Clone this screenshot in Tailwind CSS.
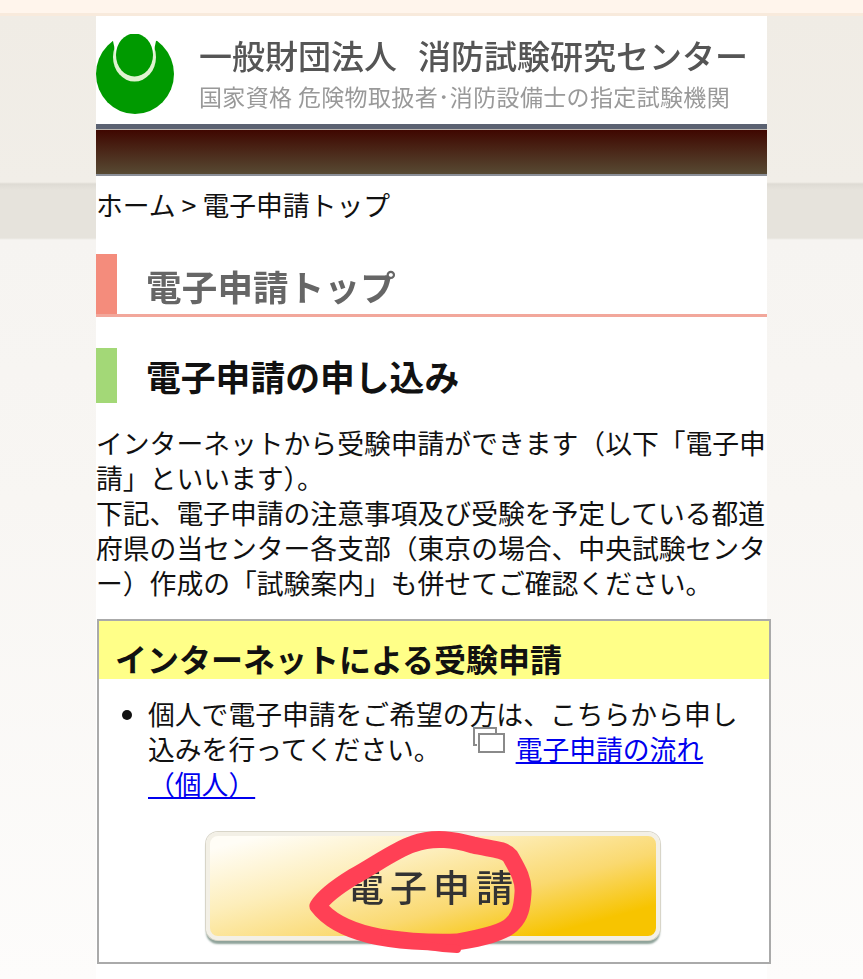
<!DOCTYPE html>
<html lang="ja">
  <head>
    <title>電子申請トップ</title>
    <meta charset="UTF-8" />
    <meta name="viewport" content="width=device-width, initial-scale=1.0" />
    <script src="https://cdn.jsdelivr.net/npm/@tailwindcss/browser@4"></script>
  </head>

  <body class="relative h-[979px] overflow-hidden font-['Noto_Sans_CJK_JP','Liberation_Sans',sans-serif] text-[26.8px] leading-[35px] text-[#111] bg-[linear-gradient(to_bottom,#fff5ec_0,#fff5ec_13px,#f8eadc_13px,#f8eadc_16px,#f0ece5_16px,#f1eee8_182px,#dedbd4_184px,#e6e3dc_190px,#e6e3dc_238px,#f6f4f1_240px,#f8f6f3_500px,#fdfcfb_979px)]">
    <div class="ml-[96px] mt-[16px] h-[963px] w-[671px] bg-white pt-0">
      <!-- logo and title -->
      <div class="flex h-[108px]">
        <svg class="mt-[18px] h-[80px] w-[78px] shrink-0 blur-[0.4px]" viewBox="0 0 78 80">
          <ellipse cx="39" cy="40" rx="39" ry="40" fill="#009a00" />
          <ellipse cx="38.5" cy="23" rx="21.5" ry="24.5" fill="#dff2d0" />
          <path d="M10 -1 H68 V3 L60 7 C59 12 58 16 57 20 H20 C19 16 18 12 17 7 L10 3 Z" fill="#fff" />
          <ellipse cx="38.5" cy="21" rx="18.5" ry="21.5" fill="#009a00" />
        </svg>
        <div class="ml-[25px] min-w-0 blur-[0.5px]">
          <div class="mt-[16px] flex h-[46px] items-center whitespace-nowrap text-[33px] leading-[46px] font-medium text-[#555]">
            <span>一般財団法人</span><span class="ml-[21px]">消防試験研究センター</span>
          </div>
          <div class="mt-[3px] whitespace-nowrap text-[23px] leading-[30px] tracking-[0.35px] text-[#999]">国家資格 危険物取扱者･消防設備士の指定試験機関</div>
        </div>
      </div>
      <!-- nav bar -->
      <div class="h-[5px] bg-[#5b6272]"></div>
      <div class="h-[47px] border-t border-t-[#b9b4ae] border-b-2 border-b-[#8b8f98] bg-[linear-gradient(to_bottom,#3f0700,#574a33)]"></div>

      <div class="pt-[11px] whitespace-nowrap">ホーム &gt; 電子申請トップ</div>

      <!-- page title -->
      <h1 class="mt-[32px] flex h-[63px] border-b-[3px] border-b-[#f2a79b]">
        <span class="w-[21px] shrink-0 bg-[#f48c7c]"></span>
        <span class="ml-[29px] text-[35.5px] leading-[64px] font-bold tracking-[0.2px] text-[#666] blur-[0.6px]">電子申請トップ</span>
      </h1>

      <h2 class="mt-[31px] flex h-[55px]">
        <span class="w-[21px] shrink-0 bg-[#a3d877]"></span>
        <span class="ml-[29px] text-[34.8px] leading-[57px] font-bold text-[#111]">電子申請の申し込み</span>
      </h2>

      <p class="mt-[22px] w-[671px]">インターネットから受験申請ができます（以下「電子申請」といいます）。<br />下記、電子申請の注意事項及び受験を予定している都道府県の当センター各支部（東京の場合、中央試験センター）作成の「試験案内」も併せてご確認ください。</p>

      <!-- notice box -->
      <div class="ml-px mt-[19px] h-[345px] w-[674px] border-2 border-[#aaa] bg-white">
        <h3 class="h-[58px] bg-[#ffff88] pl-[16px] text-[32px] leading-[74px] font-bold whitespace-nowrap text-[#111]">インターネットによる受験申請</h3>
        <ul class="mt-[17px] list-none pl-[49px] pr-[20px]">
          <li class="relative">
            <span class="absolute left-[-26px] top-[14px] size-[10px] rounded-full bg-[#111]"></span>
            個人で電子申請をご希望の方は、こちらから申し込みを行ってください。<span class="inline-block w-[75px]"></span><a href="#" class="text-[#0000ee] underline">電子申請の流れ（個人）</a>
          </li>
        </ul>
        <div class="ml-[107px] mt-[31px] flex h-[108px] w-[454px] items-center justify-center rounded-[12px] border-[4px] border-[#f3f0e6] bg-[linear-gradient(165deg,#fffdf6_6%,#fdeebb_34%,#fad970_62%,#f7c400_86%)] shadow-[0_0_0_1px_#d8d5c8,0_4px_2px_#8fa39a]">
          <span class="text-[37px] font-medium tracking-[6px] text-[#333] blur-[0.6px]">電子申請</span>
        </div>
      </div>
    </div>

    <!-- window-copy cursor icon lying over the text -->
    <svg class="absolute left-[472px] top-[726px] h-[30px] w-[34px]" viewBox="0 0 34 30" fill="none" stroke="#8a8a8a" stroke-width="2">
      <path d="M5 19 H2 V2 H24 V7" />
      <rect x="7" y="8" width="25" height="18" fill="#fff" fill-opacity="0.6" />
    </svg>

    <!-- red marker scribble -->
    <svg class="absolute left-0 top-0 h-[979px] w-[863px]" viewBox="0 0 863 979" fill="none">
      <path d="M457 942 C430 943 395 941 370 935 C350 930 330 922 318 906 C325 895 340 885 353 877 C375 865 395 850 413 844 C435 836 455 840 473 845 C490 849 505 849 510 856 C518 870 524 880 523 893 C522 908 520 916 513 923 C505 933 480 938 457 942" stroke="#ff4055" stroke-width="17" stroke-linecap="round" stroke-linejoin="round" />
      <path d="M385 938 C420 946 440 948 457 949" stroke="#ff4055" stroke-width="8" stroke-linecap="round" />
    </svg>
  </body>
</html>
